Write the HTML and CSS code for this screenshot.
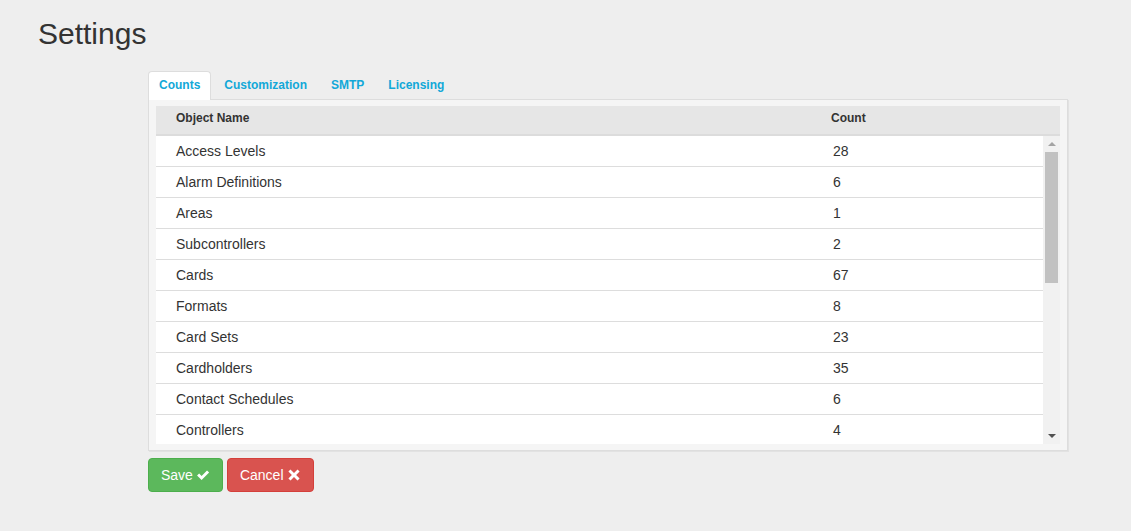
FILE: index.html
```html
<!DOCTYPE html>
<html lang="en">
<head>
    <meta charset="UTF-8">
    <title>Settings</title>
    <link rel="stylesheet" href="styles.css">
</head>
<body>
    <h1 class="page-title">Settings</h1>

    <div class="settings">
        <ul class="tabs">
            <li class="tab active">Counts</li>
            <li class="tab">Customization</li>
            <li class="tab">SMTP</li>
            <li class="tab">Licensing</li>
        </ul>

        <div class="tab-panel">
            <div class="grid-head">
                <div class="col-name">Object Name</div>
                <div class="col-count">Count</div>
            </div>
            <div class="grid-body">
                <div class="grid-rows">
                    <div class="row"><div class="col-name">Access Levels</div><div class="col-count">28</div></div>
                    <div class="row"><div class="col-name">Alarm Definitions</div><div class="col-count">6</div></div>
                    <div class="row"><div class="col-name">Areas</div><div class="col-count">1</div></div>
                    <div class="row"><div class="col-name">Subcontrollers</div><div class="col-count">2</div></div>
                    <div class="row"><div class="col-name">Cards</div><div class="col-count">67</div></div>
                    <div class="row"><div class="col-name">Formats</div><div class="col-count">8</div></div>
                    <div class="row"><div class="col-name">Card Sets</div><div class="col-count">23</div></div>
                    <div class="row"><div class="col-name">Cardholders</div><div class="col-count">35</div></div>
                    <div class="row"><div class="col-name">Contact Schedules</div><div class="col-count">6</div></div>
                    <div class="row"><div class="col-name">Controllers</div><div class="col-count">4</div></div>
                    <div class="row"><div class="col-name">Doors</div><div class="col-count">12</div></div>
                    <div class="row"><div class="col-name">Elevators</div><div class="col-count">2</div></div>
                    <div class="row"><div class="col-name">Holidays</div><div class="col-count">10</div></div>
                    <div class="row"><div class="col-name">Inputs</div><div class="col-count">48</div></div>
                    <div class="row"><div class="col-name">Outputs</div><div class="col-count">24</div></div>
                </div>
                <!-- scrollbar drawn by hand, the renderer hides native ones -->
                <div class="scrollbar">
                    <div class="scroll-btn up"></div>
                    <div class="scroll-track">
                        <div class="scroll-thumb"></div>
                    </div>
                    <div class="scroll-btn down"></div>
                </div>
            </div>
        </div>

        <div class="actions">
            <button class="btn btn-save">Save
                <svg class="btn-icon" viewBox="0 0 16 16"><path d="M1.2 8.6 L3.6 6.2 L6.4 9 L12.6 2.8 L15 5.2 L6.4 13.8 Z" fill="#fff"/></svg>
            </button>
            <button class="btn btn-cancel">Cancel
                <svg class="btn-icon" viewBox="0 0 16 16"><path d="M4 1.6 L8 5.6 L12 1.6 L14.4 4 L10.4 8 L14.4 12 L12 14.4 L8 10.4 L4 14.4 L1.6 12 L5.6 8 L1.6 4 Z" fill="#fff"/></svg>
            </button>
        </div>
    </div>
</body>
</html>
```

FILE: styles.css
```css
* {
    margin: 0;
    padding: 0;
    box-sizing: border-box;
}

body {
    background: #eeeeee;
    color: #333;
    font-family: "Liberation Sans", Arial, sans-serif;
    font-size: 14px;
}

.page-title {
    font-size: 30px;
    font-weight: normal;
    line-height: 33px;
    margin: 17px 0 0 38px;
}

.settings {
    width: 920px;
    margin: 21px 0 0 148px;
}

/* Tabs */
.tabs {
    list-style: none;
    display: flex;
    gap: 2px;
}

.tab {
    font-size: 12px;
    font-weight: bold;
    line-height: 14px;
    color: #12a8d8;
    padding: 6px 10px 7px;
    border: 1px solid transparent;
    border-bottom: none;
    border-radius: 4px 4px 0 0;
    cursor: pointer;
}

.tab.active {
    background: white;
    border-color: #ddd;
    margin-bottom: -1px;
    padding-bottom: 8px;
    position: relative;
}

/* Panel */
.tab-panel {
    background: #f5f5f5;
    border: 1px solid #ddd;
    box-shadow: 1px 1px 0 #e2e2e2;
    padding: 6px 7px 6px;
}

.grid-head {
    display: flex;
    background: #e6e6e6;
    border-bottom: 2px solid #dcdcdc;
    height: 30px;
    font-size: 12px;
    font-weight: bold;
    line-height: 25px;
}

.col-name {
    width: 655px;
    padding-left: 20px;
}

.col-count {
    padding-left: 20px;
}

.grid-body {
    display: flex;
    height: 308px;
}

.grid-rows {
    flex: 1;
    overflow: hidden;
    background: white;
}

.row {
    display: flex;
    height: 31px;
    line-height: 30px;
    border-bottom: 1px solid #dddddd;
}

.row .col-count {
    padding-left: 22px;
}

/* Scrollbar */
.scrollbar {
    width: 17px;
    display: flex;
    flex-direction: column;
    background: #f1f1f1;
}

.scroll-btn {
    height: 16px;
    display: flex;
    justify-content: center;
    align-items: center;
}

.scroll-btn.up::before {
    content: "";
    border-left: 4px solid transparent;
    border-right: 4px solid transparent;
    border-bottom: 4px solid #a3a3a3;
}

.scroll-btn.down::before {
    content: "";
    border-left: 4px solid transparent;
    border-right: 4px solid transparent;
    border-top: 4px solid #505050;
}

.scroll-track {
    flex: 1;
    padding: 0 2px;
}

.scroll-thumb {
    height: 131px;
    background: #c1c1c1;
}

/* Buttons */
.actions {
    display: flex;
    gap: 4px;
    margin-top: 7px;
}

.btn {
    display: flex;
    align-items: center;
    gap: 3px;
    height: 34px;
    padding: 0 12px;
    font-family: "Liberation Sans", Arial, sans-serif;
    font-size: 14px;
    color: white;
    border: 1px solid;
    border-radius: 4px;
    cursor: pointer;
}

.btn-icon {
    width: 14px;
    height: 14px;
}

.btn-save {
    background: #5cb85c;
    border-color: #4cae4c;
}

.btn-cancel {
    background: #d9534f;
    border-color: #d43f3a;
}
```
